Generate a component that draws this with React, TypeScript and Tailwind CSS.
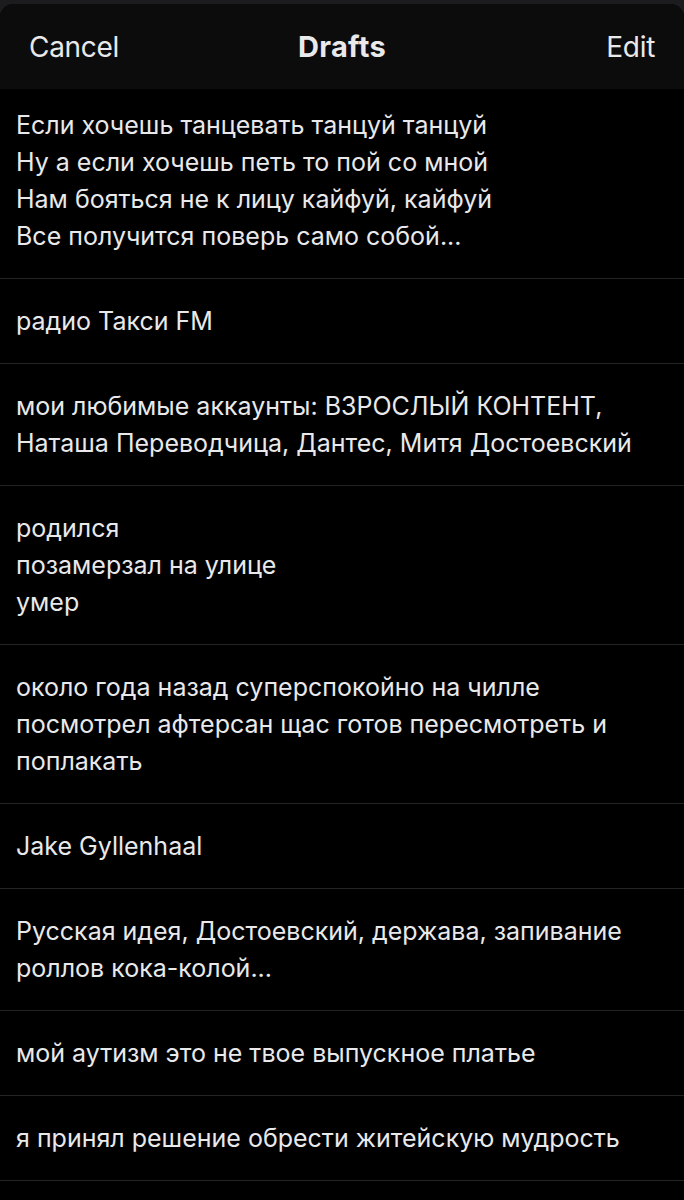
import React from 'react';

const drafts: string[][] = [
  [
    'Если хочешь танцевать танцуй танцуй',
    'Ну а если хочешь петь то пой со мной',
    'Нам бояться не к лицу кайфуй, кайфуй',
    'Все получится поверь само собой...',
  ],
  ['радио Такси FM'],
  ['мои любимые аккаунты: ВЗРОСЛЫЙ КОНТЕНТ,', 'Наташа Переводчица, Дантес, Митя Достоевский'],
  ['родился', 'позамерзал на улице', 'умер'],
  [
    'около года назад суперспокойно на чилле',
    'посмотрел афтерсан щас готов пересмотреть и',
    'поплакать',
  ],
  ['Jake Gyllenhaal'],
  ['Русская идея, Достоевский, держава, запивание', 'роллов кока-колой...'],
  ['мой аутизм это не твое выпускное платье'],
  ['я принял решение обрести житейскую мудрость'],
];

export default function App() {
  return (
    <div className="min-h-screen w-[684px] bg-[#1c1c1e] pt-1 font-['Inter',sans-serif] text-[#e9e9eb] antialiased">
      <div className="flex min-h-[1196px] flex-col rounded-t-[14px] bg-black overflow-hidden">
        {/* Header */}
        <div className="grid h-[85px] grid-cols-[1fr_auto_1fr] items-center bg-[#0c0c0d] px-[29px]">
          <button className="justify-self-start text-[28px] font-normal tracking-[-0.3px]">Cancel</button>
          <h1 className="text-[29px] font-bold tracking-[0.3px]">Drafts</h1>
          <button className="justify-self-end text-[28px] font-normal tracking-[-0.3px]">Edit</button>
        </div>

        {/* List */}
        <ul>
          {drafts.map((lines, i) => (
            <li
              key={i}
              className={`border-b border-[#242426] px-4 pb-[23px] ${i === 0 ? 'pt-[18px]' : 'pt-6'}`}
            >
              {lines.map((line, j) => (
                <p key={j} className="whitespace-nowrap text-[25px] leading-[37px]">
                  {line}
                </p>
              ))}
            </li>
          ))}
        </ul>
      </div>
    </div>
  );
}
